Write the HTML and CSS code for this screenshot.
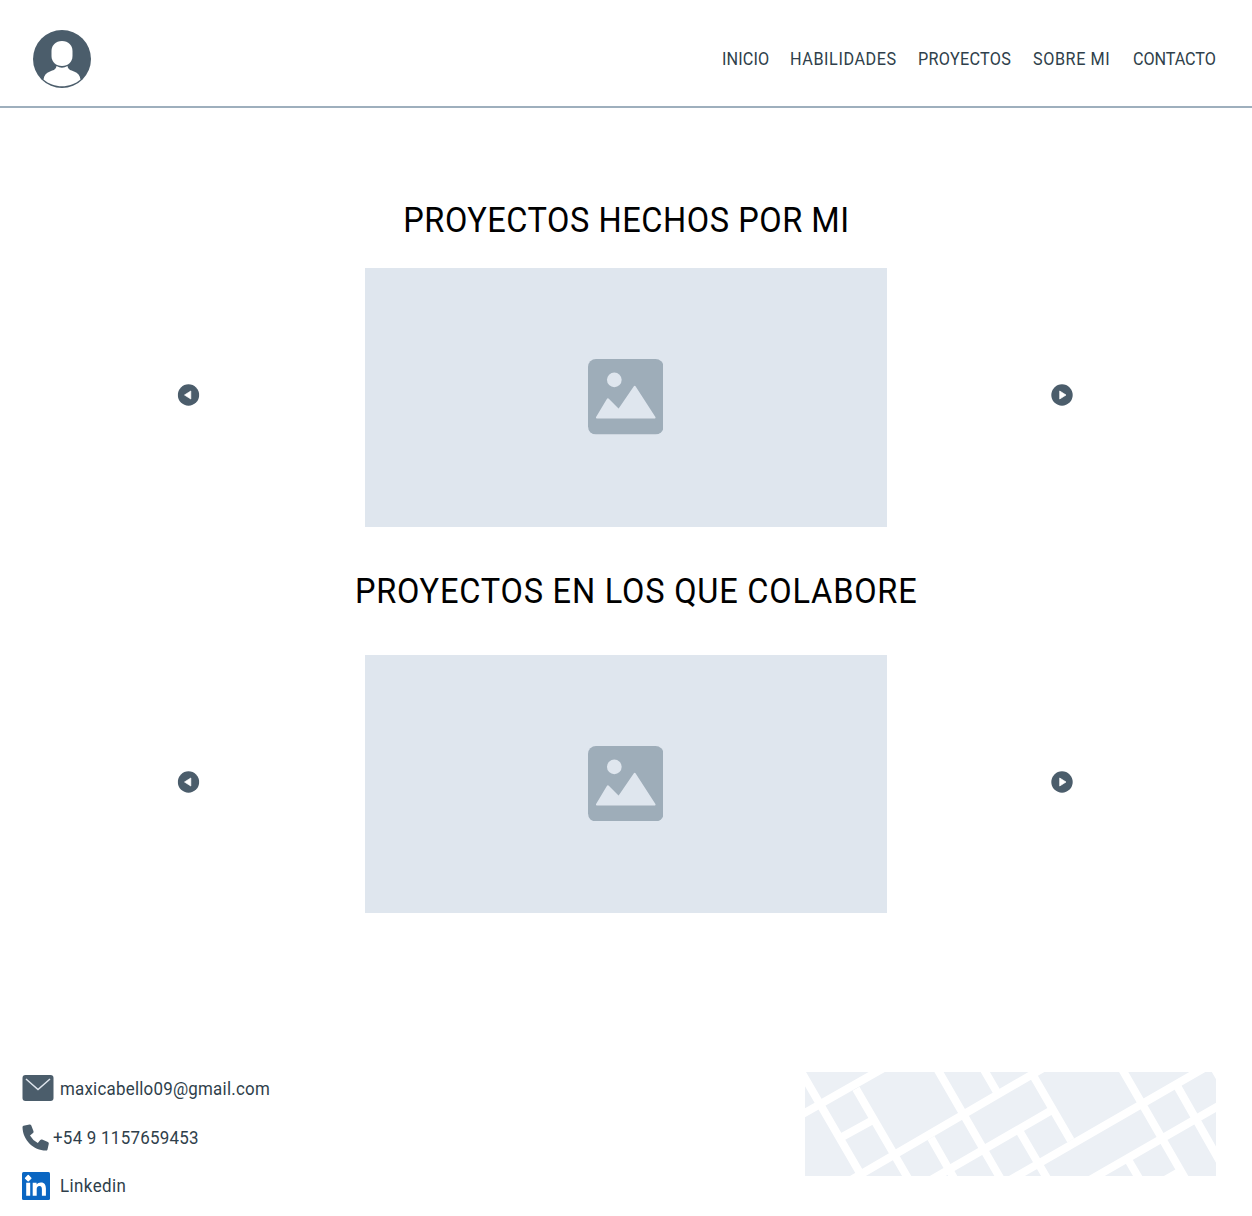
FILE: index.html
```html
<!DOCTYPE html>
<html lang="es">
<head>
<meta charset="utf-8">
<title>Proyectos</title>
<link rel="stylesheet" href="styles.css">
</head>
<body>
<svg class="defs" width="0" height="0">
  <symbol id="picture" viewBox="0 0 76 76">
    <rect width="76" height="76" rx="8" fill="#9eadb9"/>
    <circle cx="26.5" cy="21" r="7.4" fill="#dfe6ee"/>
    <path d="M9 59 20 40.500L31 51.500L47 28 67 59Z" fill="#dfe6ee" stroke="#dfe6ee" stroke-width="2" stroke-linejoin="round"/>
  </symbol>
  <symbol id="arrow" viewBox="0 0 22 22">
    <circle cx="11" cy="11" r="10.700" fill="#4b5d6b"/>
    <path d="M8.700 7 15 11 8.700 15Z" fill="#fff" stroke="#fff" stroke-width=".7" stroke-linejoin="round"/>
  </symbol>
</svg>
<header class="header">
  <svg class="avatar" viewBox="0 0 58 58">
    <circle cx="29" cy="29" r="29" fill="#4b5d6b"/>
    <path d="M29 11C35.500 11 39.500 15.500 39.500 21V26C39.500 32 35 36 29 36S18.500 32 18.500 26V21C18.500 15.500 22.500 11 29 11Z" fill="#fff"/>
    <path d="M23.500 36Q29 39.500 34.500 36C35 40 38 40 41 41.500C45 43 47 45.500 47.500 49.500C37.500 58.500 20.500 58.500 10.500 49.500C11 45.500 13 43 17 41.500C20 40 23 40 23.500 36Z" fill="#fff"/>
  </svg>
  <nav class="nav">
    <a class="w-inicio"><span class="narrow">INICIO</span></a>
    <a class="w-habilidades"><span class="narrow">HABILIDADES</span></a>
    <a class="w-proyectos"><span class="narrow">PROYECTOS</span></a>
    <a class="w-sobre"><span class="narrow">SOBRE MI</span></a>
    <a class="w-contacto"><span class="narrow">CONTACTO</span></a>
  </nav>
</header>
<main>
  <section class="projects">
    <h2 class="own">PROYECTOS HECHOS POR MI</h2>
    <div class="carousel">
      <svg class="arrow prev"><use href="#arrow"/></svg>
      <div class="slide"><svg class="picture"><use href="#picture"/></svg></div>
      <svg class="arrow"><use href="#arrow"/></svg>
    </div>
  </section>
  <section class="projects shared">
    <h2 class="team">PROYECTOS EN LOS QUE COLABORE</h2>
    <div class="carousel">
      <svg class="arrow prev"><use href="#arrow"/></svg>
      <div class="slide"><svg class="picture"><use href="#picture"/></svg></div>
      <svg class="arrow"><use href="#arrow"/></svg>
    </div>
  </section>
</main>
<footer class="footer">
  <ul class="contact">
    <li class="mail">
      <svg width="32" height="26" viewBox="0 0 32 26"><rect x=".5" width="31" height="26" rx="3" fill="#4b5d6b"/><path d="M4 4 16 14.500 28 4" fill="none" stroke="#dfe6ee" stroke-width="1.500"/></svg>
      <span class="narrow mail-text">maxicabello09@gmail.com</span>
    </li>
    <li class="phone">
      <svg width="27" height="27" viewBox="0 0 27 27"><path d="M1.500 1.800 7.500.5Q8.700.3 9.300 1.500L11.500 7.300Q11.900 8.300 11 9.100L8 11.500Q10.800 16.500 15.800 19.100L18.300 16Q19 15.200 20.100 15.600L25.900 18Q27 18.500 26.800 19.700L25.500 25.400Q25.200 26.600 23.900 26.600C11.500 26.400.8 16 .5 3.200Q.5 2 1.500 1.800Z" fill="#4b5d6b"/></svg>
      <span class="narrow phone-text">+54 9 1157659453</span>
    </li>
    <li class="linkedin">
      <svg width="28" height="28" viewBox="0 0 28 28"><rect width="28" height="28" rx="1.500" fill="#0a66c2"/><path d="M6.200 3.600 8.800 6.200 6.200 8.800 3.600 6.200Z" fill="#fff" stroke="#fff" stroke-width="1.500" stroke-linejoin="round"/><path d="M4.200 10.800H8.200V23.800H4.200ZM10.700 10.800H14.600V12.600C15.500 11.100 17 10.400 18.900 10.400C22.800 10.400 23.900 13 23.900 16.600V23.800H19.900V17.400C19.900 15.300 19.500 13.900 17.500 13.900C15.400 13.900 14.700 15.400 14.700 17.400V23.800H10.700Z" fill="#fff"/></svg>
      <span class="narrow linkedin-text">Linkedin</span>
    </li>
  </ul>
  <svg class="map" viewBox="0 0 411 104">
    <rect width="411" height="104" fill="#ecf0f5"/>
    <g fill="none" stroke="#fff" stroke-width="8">
      <path d="M-6.500-5 59 108M51 16.700 104 108M131.100-5 196.300 108M177.400-5 192 20.300M126 66 150 108"/>
      <path d="M-8 45.300 80.500-5M37 65 67 48.500M46 108 240-5M125.800 108 247 38"/>
      <path d="M229 5 265.700 68.300M215 60 243 108M205 108 401-5M315.800-5 381 108M284.800 108 415 33"/>
      <path d="M372.700 15 416 91.500M324 89.300 335 108M408.600-5 416 8M360 108 378 97.800"/>
    </g>
  </svg>
</footer>
</body>
</html>
```
FILE: styles.css
```css
* { box-sizing: border-box; }
body { margin: 0; height: 1216px; background: #fff; color: #2f3f4b; font-family: Roboto, "Liberation Sans", sans-serif; display: flex; flex-direction: column; }
.defs { display: block; height: 0; }
.header { height: 108px; border-bottom: 2px solid #9eafbd; display: flex; justify-content: space-between; padding: 30px 36px 0 33px; }
.avatar { width: 58px; height: 58px; }
.nav { display: flex; gap: 20px; font-size: 18px; line-height: 58px; }
.nav a { white-space: nowrap; }
.narrow { display: inline-block; transform: scaleX(.9); transform-origin: left center; }
.w-inicio { width: 48px; letter-spacing: .15px; }
.w-habilidades { width: 108px; letter-spacing: .65px; }
.w-proyectos { width: 95px; letter-spacing: .33px; }
.w-sobre { width: 80px; letter-spacing: .65px; }
.w-contacto { width: 83px; letter-spacing: -.1px; }
.projects { padding-top: 88px; }
.shared { padding-top: 40px; }
h2 { margin: 0; height: 48px; line-height: 50px; font-size: 35px; font-weight: 400; color: #000; text-align: center; white-space: nowrap; transform: scaleX(.93); }
.own { margin-bottom: 24px; letter-spacing: .58px; padding-left: 1px; }
.team { margin-bottom: 40px; padding-left: 22px; letter-spacing: .84px; }
.carousel { display: flex; align-items: flex-start; justify-content: space-between; padding: 0 179px 0 178px; }
.arrow { width: 22px; height: 22px; margin-top: 116px; }
.prev { transform: translateX(-.5px) scaleX(-1); }
.slide { width: 522px; height: 258.5px; background: #dfe6ee; display: flex; align-items: flex-start; justify-content: center; padding-top: 91px; }
.shared .slide { height: 258px; }
.picture { width: 75.5px; height: 75.5px; }
.footer { margin-top: auto; height: 144px; display: flex; justify-content: space-between; padding: 0 36px 0 22px; }
.contact { list-style: none; margin: 0; padding: 0; font-size: 18px; }
.contact li { display: flex; align-items: center; white-space: nowrap; }
.contact .narrow { transform: scaleX(.94); }
.mail { height: 32px; gap: 6px; }
.mail-text { letter-spacing: .24px; }
.phone { height: 27px; margin-top: 20px; gap: 4px; }
.phone-text { letter-spacing: .28px; }
.linkedin { height: 28px; margin-top: 21px; gap: 9.5px; }
.linkedin-text { letter-spacing: .45px; margin-top: -2px; }
.map { width: 411px; height: 104px; }
```
